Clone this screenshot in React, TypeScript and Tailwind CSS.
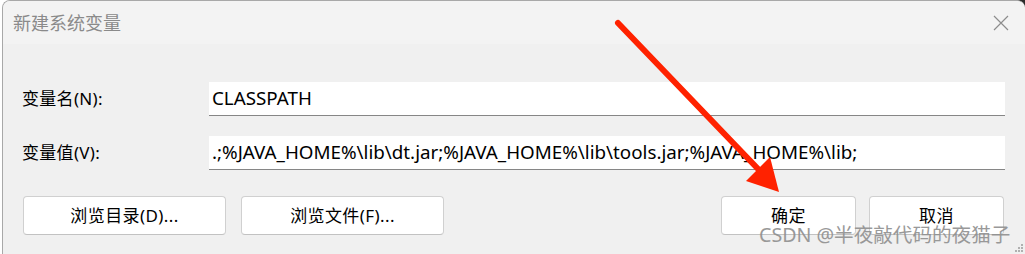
import React from "react";

const font = { fontFamily: '"Noto Sans", "Noto Sans CJK SC", sans-serif' };

function Btn({ label, w }: { label: string; w: string }) {
  return (
    <div
      className={`${w} h-[39px] flex items-center justify-center bg-white border border-[#d0d0d0] border-b-[#c2c2c2] rounded-[4px] text-[17px] tracking-[0.4px] text-black`}
    >
      {label}
    </div>
  );
}

export default function App() {
  return (
    <div className="relative w-[1025px] h-[254px] bg-white overflow-hidden" style={font}>
      {/* top strip of the window behind */}
      <div className="absolute top-0 left-[963px] w-[62px] h-[2px] bg-[#2b2b2b]" />
      <div className="absolute top-0 left-[923px] w-[40px] h-[1px] bg-[#9a9a9a]" />
      <div className="absolute top-0 left-[33px] w-[1px] h-[3px] bg-[#8a8a8a]" />
      <div className="absolute top-0 right-0 w-[8px] h-[8px] bg-[#2b2b2b]" />

      <div className="absolute inset-0 ml-[2px] rounded-tl-[8px] rounded-tr-[8px] border-l border-t border-[#a8a8a8] bg-[#f0f0f0] flex flex-col overflow-hidden">
        {/* title bar */}
        <div className="h-[43px] shrink-0 bg-[#f3f3f3] flex items-center justify-between pl-[10px] pr-[16px]">
          <span className="text-[18px] text-[#8a8a8a] leading-none">新建系统变量</span>
          <svg width="16" height="16" viewBox="0 0 16 16" className="mt-[1px]">
            <path d="M1 1 L15 15 M15 1 L1 15" stroke="#8c8c8c" strokeWidth="1.2" fill="none" />
          </svg>
        </div>

        {/* body */}
        <div className="flex flex-col pt-[38px] pl-[19px] pr-[20px]">
          <div className="flex items-center h-[34px]">
            <span className="w-[187px] text-[17px] tracking-[0.3px] text-black">变量名(N):</span>
            <div className="flex-1 h-[34px] bg-white border-b border-[#868686] flex items-center pl-[3px] text-[18.8px] text-black">
              CLASSPATH
            </div>
          </div>
          <div className="flex items-center h-[34px] mt-[20px]">
            <span className="w-[187px] text-[17px] tracking-[0.3px] text-black">变量值(V):</span>
            <div className="flex-1 h-[34px] bg-white border-b border-[#868686] flex items-center pl-[3px] text-[18.8px] text-black whitespace-nowrap">
              .;%JAVA_HOME%\lib\dt.jar;%JAVA_HOME%\lib\tools.jar;%JAVA_HOME%\lib;
            </div>
          </div>
          <div className="flex mt-[26px] pl-[1px] pr-[1px]">
            <div className="flex gap-[15px]">
              <Btn label="浏览目录(D)..." w="w-[203px]" />
              <Btn label="浏览文件(F)..." w="w-[203px]" />
            </div>
            <div className="flex gap-[13px] ml-auto">
              <Btn label="确定" w="w-[135px]" />
              <Btn label="取消" w="w-[135px]" />
            </div>
          </div>
        </div>
      </div>

      {/* red arrow annotation */}
      <svg className="absolute inset-0 pointer-events-none" width="1025" height="254">
        <line x1="618" y1="23" x2="760" y2="171" stroke="#ff2200" strokeWidth="6" strokeLinecap="round" />
        <polygon points="779,192 746,181 770,157" fill="#ff2200" />
      </svg>

      {/* watermark */}
      <div className="absolute left-[759px] top-[223px] text-[19.6px] leading-[24px] text-[#8f8f8f] opacity-90 whitespace-nowrap">
        CSDN @半夜敲代码的夜猫子
      </div>

      {/* resize grip */}
      <div className="absolute right-[2px] bottom-[2px] grid grid-cols-3 gap-[1px]">
        <span className="w-[2px] h-[2px]" />
        <span className="w-[2px] h-[2px]" />
        <span className="w-[2px] h-[2px] bg-[#b0b0b0]" />
        <span className="w-[2px] h-[2px]" />
        <span className="w-[2px] h-[2px] bg-[#b0b0b0]" />
        <span className="w-[2px] h-[2px] bg-[#b0b0b0]" />
        <span className="w-[2px] h-[2px] bg-[#b0b0b0]" />
        <span className="w-[2px] h-[2px] bg-[#b0b0b0]" />
        <span className="w-[2px] h-[2px] bg-[#b0b0b0]" />
      </div>
    </div>
  );
}
